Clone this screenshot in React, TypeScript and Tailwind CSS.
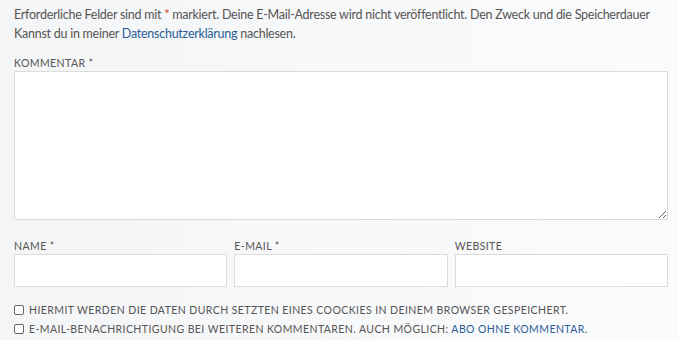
export default function App() {
  const label = "block text-[10.5px] uppercase tracking-[0.04em] text-[#555] pt-[3px] leading-[15px]";
  const input = "block w-full h-[33px] bg-white border border-[#dcdcdc] outline-none";

  return (
    <div
      className="w-[678px] h-[340px] overflow-hidden bg-gradient-to-r from-[#f4f5f7] to-[#fafbfc] text-[#555] pl-[14px] pr-[10px] pt-[5px]"
      style={{ fontFamily: "Lato, 'Noto Sans', sans-serif" }}
    >
      {/* Notice */}
      <p className="text-[12.5px] tracking-[-0.02em] leading-[19px]">
        Erforderliche Felder sind mit <span className="text-[#d9362b]">*</span> markiert. Deine E-Mail-Adresse wird nicht
        veröffentlicht. Den Zweck und die Speicherdauer
        <br />
        Kannst du in meiner <a href="#" className="text-[#2a5d95]">Datenschutzerklärung</a> nachlesen.
      </p>

      {/* Comment */}
      <div className="mt-[10px]">
        <label className={label}>Kommentar *</label>
        <textarea className="block w-full h-[149px] bg-white border border-[#dcdcdc] outline-none resize-y" />
      </div>

      {/* Name / mail / website */}
      <div className="grid grid-cols-3 gap-[7px] mt-[16px]">
        <div>
          <label className={label}>Name *</label>
          <input className={input} type="text" />
        </div>
        <div>
          <label className={label}>E-Mail *</label>
          <input className={input} type="email" />
        </div>
        <div>
          <label className={label}>Website</label>
          <input className={input} type="url" />
        </div>
      </div>

      {/* Checkboxes */}
      <div className="mt-[15px] flex flex-col gap-[3px] text-[10.5px] uppercase tracking-[0.04em] leading-[16px]">
        <label className="flex items-center gap-[5px]">
          <span className="w-[10px] h-[10px] border border-[#666] rounded-[2px] bg-white shrink-0" />
          Hiermit werden die Daten durch setzten eines Coockies in deinem Browser gespeichert.
        </label>
        <label className="flex items-center gap-[5px]">
          <span className="w-[10px] h-[10px] border border-[#666] rounded-[2px] bg-white shrink-0" />
          <span>
            E-Mail-Benachrichtigung bei weiteren Kommentaren. Auch möglich:{" "}
            <a href="#" className="text-[#2a5d95]">Abo ohne Kommentar</a>.
          </span>
        </label>
      </div>
    </div>
  );
}
